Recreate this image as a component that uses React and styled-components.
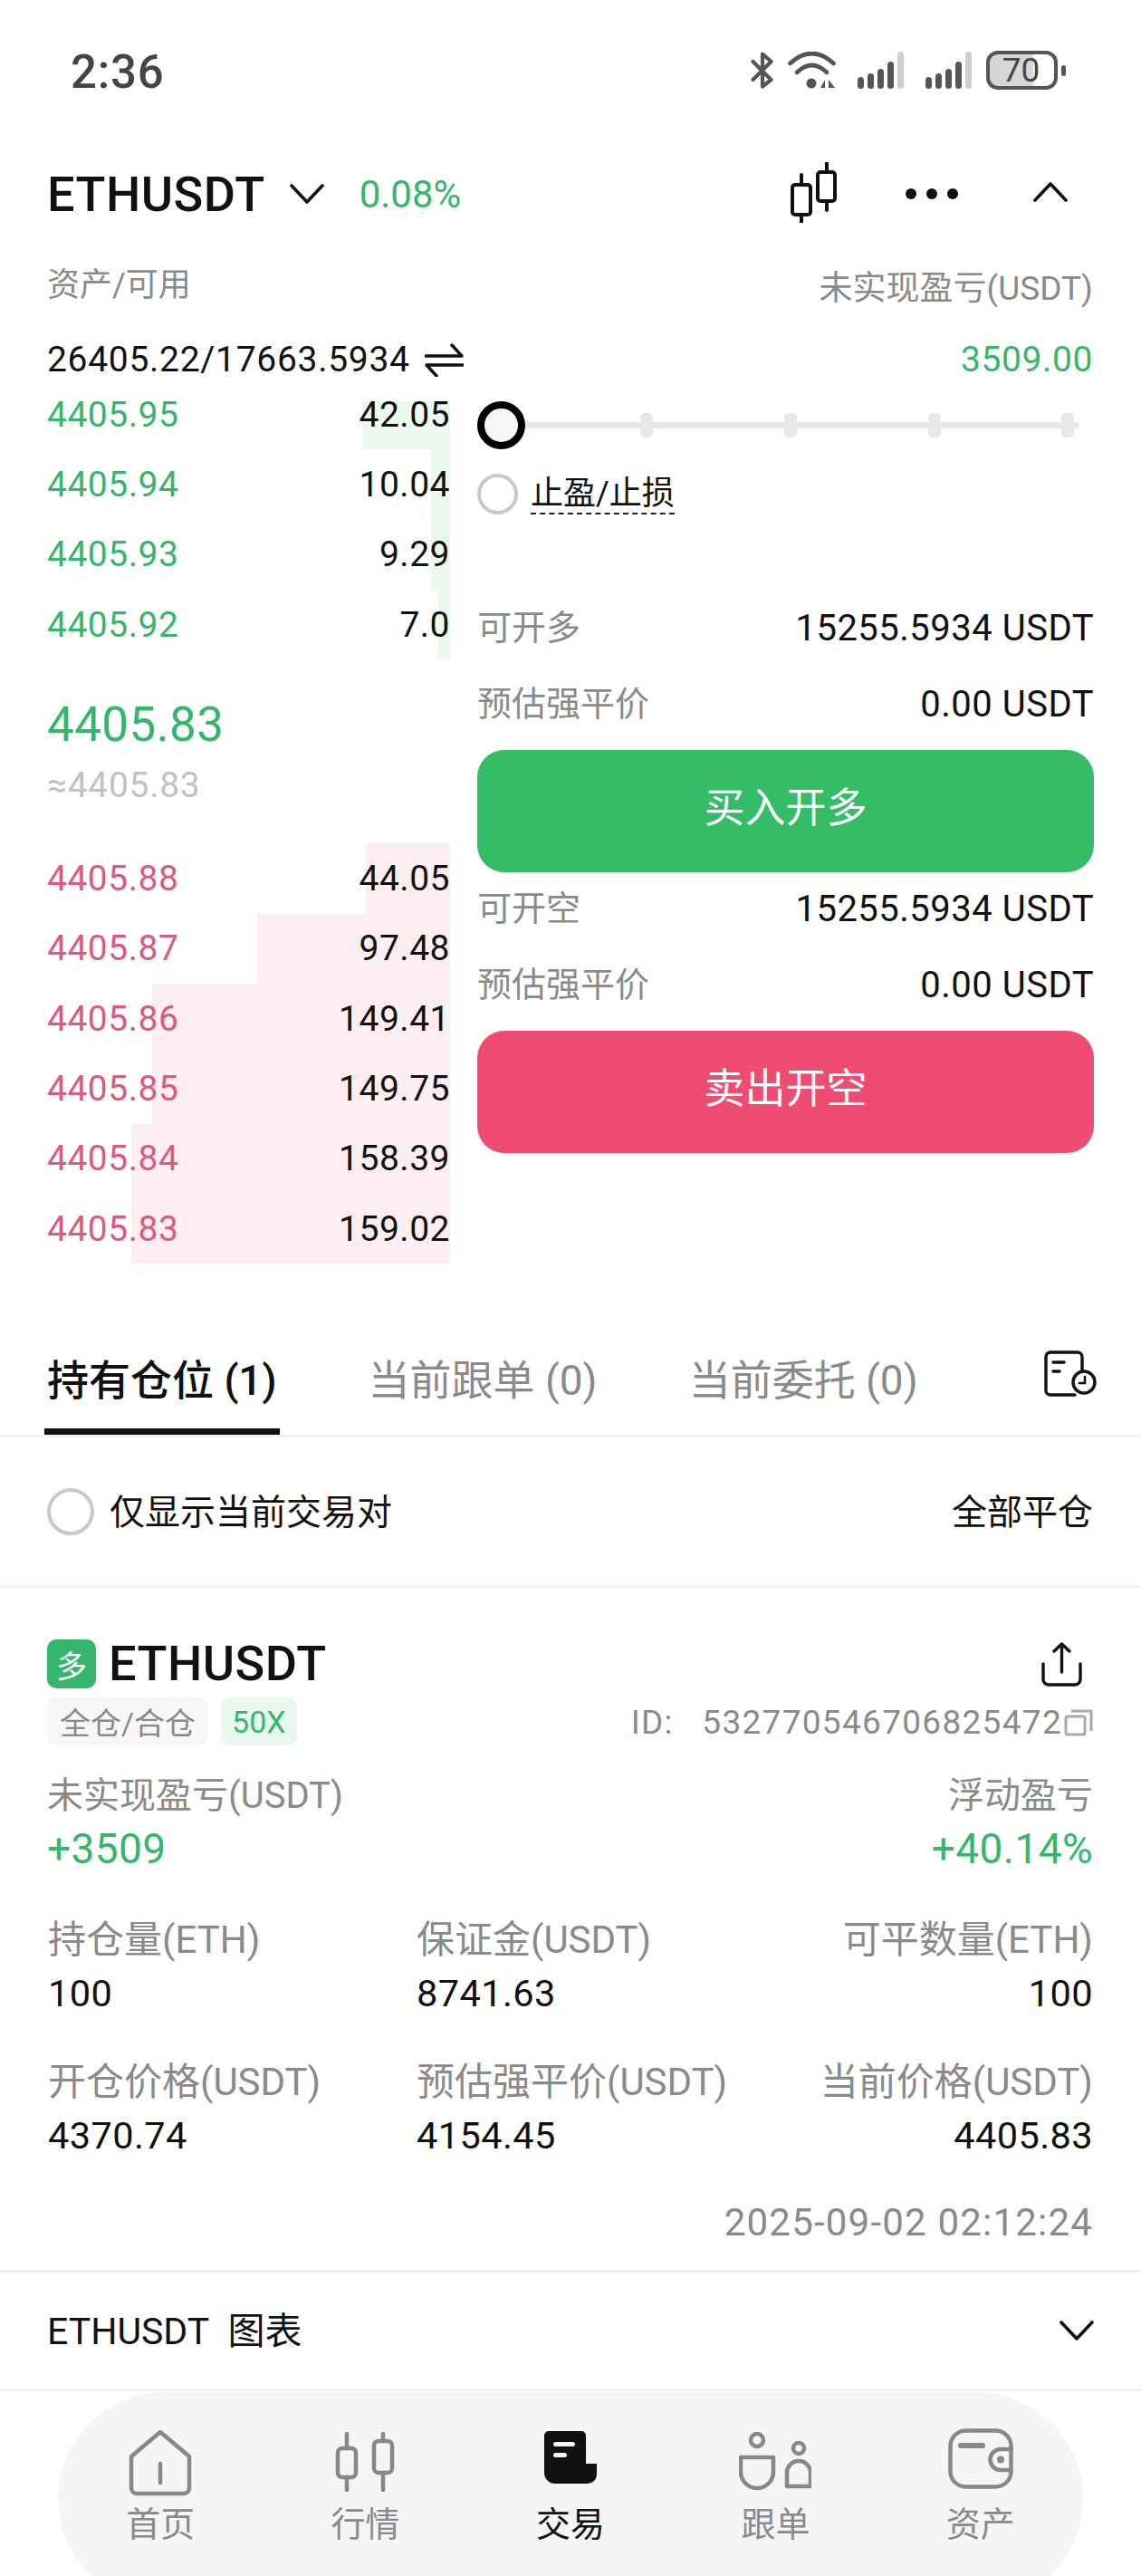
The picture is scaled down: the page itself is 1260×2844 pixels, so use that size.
import React from 'react';
import styled, { createGlobalStyle } from 'styled-components';

const Global = createGlobalStyle`
  html, body { margin: 0; padding: 0; background: #fff; }
  * { box-sizing: border-box; }
`;
const GREEN = '#36b66c';
const GRAY = '#8a8a8a';
const FONT = 'Roboto, "Noto Sans CJK SC", sans-serif';

const Page = styled.div`
  width: 1260px; height: 2844px; overflow: hidden; background: #fff;
  font-family: ${FONT}; color: #111; font-size: 38px;
`;
const StatusBar = styled.div`
  height: 156px; display: flex; align-items: center; padding: 0 83px 0 78px;
`;
const Time = styled.div`font-size: 51px; font-weight: 500; color: #444; flex: 1; letter-spacing: 0.8px; padding-top: 3px;`;
const StatusIcons = styled.div`display: flex; align-items: center; margin-top: -1px;`;
const Slot = styled.div`display: flex; margin-left: ${p => p.$left}px;`;
const Battery = styled.div`
  width: 79px; height: 43px; border: 4px solid #555; border-radius: 13px; margin-left: 16px;
  background: linear-gradient(90deg, #d6d6d6 68%, #fff 68%);
  display: flex; align-items: center; justify-content: center;
  font-size: 37px; color: #444; line-height: 1; padding-right: 2px;
`;
const BatteryTip = styled.div`width: 5px; height: 12px; background: #555; border-radius: 3px; margin-left: 4px;`;

const Header = styled.div`
  height: 112px; display: flex; align-items: center; padding: 0 81px 0 52px;
`;
const Symbol = styled.div`font-size: ${p => p.$size || 54}px; font-weight: 500; letter-spacing: 0.5px; line-height: 1;`;
const SymbolHead = styled(Symbol)`padding-top: 5px;`;
const Change = styled.div`font-size: 42px; color: ${GREEN}; margin-left: 39px; padding-top: 5px;`;
const HeaderRight = styled.div`margin-left: auto; display: flex; align-items: center;`;
const DownChevron = styled.svg`margin-left: 27px; margin-top: 4px;`;
const Dots = styled.div`display: flex; gap: 11px; margin: 4px 83px 0 76px;`;
const Dot = styled.i`width: 12px; height: 12px; background: #111; border-radius: 50%;`;

const SpreadRow = styled.div`
  display: flex; justify-content: space-between; align-items: center;
  padding: ${p => p.$pad || '0 53px 0 52px'}; height: ${p => p.$h}px;
`;
const AssetLabel = styled.div`font-size: ${p => p.$size || 36}px; color: ${GRAY}; line-height: 1; padding-bottom: ${p => p.$lift || 0}px;`;
const AssetValue = styled.div`display: flex; align-items: center; gap: 16px; font-size: 39px; letter-spacing: 0.7px; line-height: 1; transform: translateY(4px);`;
const AssetGreen = styled.div`font-size: 39px; letter-spacing: 0.6px; color: ${GREEN}; line-height: 1; transform: translateY(4px);`;

const Body = styled.div`display: flex; padding: 0 52px 0 52px; gap: 30px;`;
const Book = styled.div`width: 445px; flex: none;`;
const BookRow = styled.div`
  position: relative; height: 77.33px; display: flex; justify-content: space-between; align-items: center;
  font-size: 39px; letter-spacing: 0.5px; padding-right: 0;
`;
const Depth = styled.div`
  position: absolute; right: 0; bottom: 0; top: ${p => p.$top || 0}px;
  background: ${p => p.$ask ? '#fdeef1' : '#eaf8f0'};
`;
const Price = styled.span`position: relative; color: ${p => p.$ask ? '#db5a80' : GREEN};`;
const Qty = styled.span`position: relative;`;
const Mid = styled.div`height: 203px; display: flex; flex-direction: column; padding-top: 39px;`;
const MidPrice = styled.div`font-size: 53px; line-height: 66px; letter-spacing: 0.4px; color: ${GREEN};`;
const MidSub = styled.div`font-size: 39px; line-height: 68px; letter-spacing: 0.7px; color: #c2c2c2;`;

const Panel = styled.div`flex: 1; padding-top: 24px; min-width: 0;`;
const Slider = styled.div`position: relative; height: 53px; display: flex; align-items: center;`;
const Track = styled.div`position: absolute; left: 20px; right: 16px; top: 23px; height: 7px; background: #e8e8e8; border-radius: 4px;`;
const Thumb = styled.div`position: relative; width: 53px; height: 53px; border-radius: 50%; border: 8px solid #000; background: #f7f7f8;`;
const Tick = styled.div`position: absolute; top: 13px; width: 14px; height: 27px; background: #e8e8e8; border-radius: 5px;`;
const CheckRow = styled.div`display: flex; align-items: center; margin-top: 27px; height: 45px; gap: 14px;`;
const Circle = styled.div`
  width: ${p => p.$size}px; height: ${p => p.$size}px; border-radius: 50%; border: 4px solid #c9c9c9; flex: none;
`;
const Dashed = styled.span`font-size: 36px; line-height: 38px; border-bottom: 2px dashed #222; padding-bottom: 2px; margin-top: 2px;`;
const Info = styled.div`display: flex; flex-direction: column; gap: 4px;`;
const InfoGroup = styled(Info)`margin-top: ${p => p.$top || 0}px;`;
const InfoRow = styled.div`height: 80px; display: flex; justify-content: space-between; align-items: center;`;
const InfoLabel = styled.span`font-size: 38px; color: ${GRAY}; line-height: 1; padding-bottom: 1px;`;
const InfoValue = styled.span`font-size: 40px; letter-spacing: 0.5px;`;
const Action = styled.div`
  height: 135px; border-radius: 30px; margin-top: 11px; background: ${p => p.$bg};
  color: #fff; font-size: 45px; line-height: 1; display: flex; align-items: center; justify-content: center; padding-bottom: 6px;
`;

const Tabs = styled.div`
  margin-top: 90px; height: 102px; border-bottom: 3px solid #f1f1f1; display: flex; padding-left: 49px; padding-right: 49px; gap: 95px;
`;
const Tab = styled.div`
  height: 99px; line-height: 79px; font-size: 46px; padding: 0 3px; white-space: nowrap;
  font-weight: ${p => p.$on ? 500 : 400}; color: ${p => p.$on ? '#111' : GRAY};
  border-bottom: 7px solid ${p => p.$on ? '#111' : 'transparent'};
`;
const TabIcon = styled.svg`margin: 6px 0 0 auto; flex: none;`;
const Filter = styled.div`
  height: 166px; border-bottom: 3px solid #f1f1f1; display: flex; align-items: center; padding: 0 53px 0 52px;
`;
const FilterText = styled.span`font-size: 39px; line-height: 1; margin-left: 17px; padding-top: 3px;`;
const FilterAction = styled.span`font-size: 39px; line-height: 1; margin-left: auto; padding-top: 3px;`;

const Card = styled.div`
  padding: 57px 53px 27px 52px; border-bottom: 3px solid #f1f1f1; height: 756px;
`;
const CardHead = styled.div`display: flex; align-items: center; height: 54px;`;
const LongBadge = styled.div`
  width: 54px; height: 54px; border-radius: 10px; background: ${GREEN}; color: #fff;
  font-size: 34px; display: flex; align-items: center; justify-content: center; margin-right: 14px;
`;
const HeadRight = styled.svg`margin-left: auto; margin-right: 12px;`;
const TagRow = styled.div`display: flex; align-items: center; margin-top: 10px; height: 53px;`;
const Tag = styled.div`
  height: 53px; padding: 0 ${p => p.$pad}px; border-radius: 10px; margin-right: 14px; display: flex; align-items: center;
  background: ${p => p.$green ? '#e9f7ef' : '#f7f7f7'}; color: ${p => p.$green ? GREEN : GRAY}; font-size: ${p => p.$size}px;
`;
const IdText = styled.div`margin-left: auto; display: flex; align-items: center; font-size: 37px; color: ${GRAY}; letter-spacing: 1.3px; padding-top: 2px;`;
const PnlLabels = styled.div`display: flex; justify-content: space-between; margin-top: 28px; font-size: 40px; line-height: 56px; color: ${GRAY};`;
const PnlValues = styled.div`display: flex; justify-content: space-between; margin-top: 2px; font-size: 46px; line-height: 56px; letter-spacing: 0.4px; color: ${GREEN};`;
const Stats = styled.div`
  display: grid; grid-template-columns: 407px 1fr auto; row-gap: 42px; margin-top: 45px; padding-left: 1px;
`;
const Stat = styled.div`
  display: flex; flex-direction: column; gap: 3px; text-align: ${p => p.$right ? 'right' : 'left'};
`;
const StatLabel = styled.div`font-size: 42px; line-height: 56px; color: ${GRAY};`;
const StatValue = styled.div`font-size: 41.5px; line-height: 56px; letter-spacing: 0.4px;`;
const DateText = styled.div`margin-top: 40px; text-align: right; font-size: 42px; line-height: 56px; letter-spacing: 1.2px; color: ${GRAY};`;

const ChartRow = styled.div`
  height: 131px; border-bottom: 3px solid #f1f1f1; display: flex; align-items: center; justify-content: space-between; padding: 0 52px 0 52px;
  font-size: 41px; line-height: 1;
`;
const ChartTitle = styled.span`padding-top: 3px;`;
const Nav = styled.div`
  margin: 1px 64px 0; height: 236px; border-radius: 118px; background: #f5f5f5;
  display: grid; grid-template-columns: repeat(5, 1fr); padding-top: 41px;
`;
const NavItem = styled.div`
  display: flex; flex-direction: column; align-items: center;
  color: ${p => p.$on ? '#111' : GRAY};
`;
const NavIcon = styled.div`height: 76px; display: flex; align-items: flex-start; justify-content: center;`;
const NavLabel = styled.div`font-size: 38px; line-height: 58px;`;

const ChevronSvg = ({ up, w = 38, h = 22, s = 3.6, ...r }) => (
  <svg width={w} height={h} viewBox={`0 0 ${w} ${h}`} fill="none" stroke="#111" strokeWidth={s} strokeLinecap="round" strokeLinejoin="round" {...r}>
    <path d={up ? `M2 ${h - 2} L${w / 2} 2 L${w - 2} ${h - 2}` : `M2 2 L${w / 2} ${h - 2} L${w - 2} 2`} />
  </svg>
);
const Bluetooth = () => (
  <svg width="25" height="41" viewBox="0 0 25 41" fill="none" stroke="#555" strokeWidth="4.2" strokeLinecap="round" strokeLinejoin="round">
    <path d="M2.5 11 L22.5 31 L13 38.5 V2.5 L22.5 11 L2.5 31" />
  </svg>
);
const Wifi = () => (
  <svg width="53" height="41" viewBox="0 0 53 41" fill="none" stroke="#555" strokeWidth="4.6" strokeLinecap="round">
    <path d="M2.5 13 Q26.5 -9 50.5 13" />
    <path d="M10 23 Q26.5 7 43 23" />
    <circle cx="26" cy="35" r="5.5" fill="#555" stroke="none" />
    <path d="M41 31 L36 40 H41Z M45 31 L52 40 H45Z" fill="#555" stroke="none" />
  </svg>
);
const Signal = () => {
  const bars = [13, 17, 22, 30, 41];
  return (
    <svg width="51" height="41" viewBox="0 0 51 41">
      {bars.map((h, i) => <rect key={i} x={i * 11} y={41 - h} width="7" height={h} rx="3.5" fill={i === 4 ? '#cfcfcf' : '#555'} />)}
    </svg>
  );
};
const Candles = () => (
  <svg width="51" height="67" viewBox="0 0 51 67" fill="none" stroke="#111" strokeWidth="4" strokeLinecap="round">
    <rect x="2" y="25" width="20" height="33" rx="3" />
    <path d="M12 14 V25 M12 58 V66" />
    <rect x="30" y="11" width="19" height="32" rx="3" />
    <path d="M40 1 V11 M40 43 V53" />
  </svg>
);
const Swap = () => (
  <svg width="43" height="37" viewBox="0 0 43 37" fill="none" stroke="#111" strokeWidth="3.4" strokeLinecap="round" strokeLinejoin="round">
    <path d="M1 14 H41 L30 2" />
    <path d="M42 24 H2 L13 36" />
  </svg>
);
const HistoryIcon = () => (
  <TabIcon width="58" height="51" viewBox="0 0 58 51" fill="none" stroke="#111" strokeWidth="3.4" strokeLinecap="round">
    <path d="M42 22 V7 a5 5 0 0 0 -5 -5 H7 a5 5 0 0 0 -5 5 V44 a5 5 0 0 0 5 5 H34" />
    <path d="M10 13 H22 M10 23 H17" />
    <circle cx="44" cy="35" r="12" />
    <path d="M45 29 V36 H39" strokeWidth="2.6" />
  </TabIcon>
);
const Share = () => (
  <HeadRight width="45" height="49" viewBox="0 0 45 49" fill="none" stroke="#111" strokeWidth="3.4" strokeLinecap="round" strokeLinejoin="round">
    <path d="M22.5 33 V2 M14 10 L22.5 2 L31 10" />
    <path d="M2 24 V41 a6 6 0 0 0 6 6 H37 a6 6 0 0 0 6 -6 V24" />
  </HeadRight>
);
const Copy = () => (
  <svg width="32" height="30" viewBox="0 0 32 30" fill="none" stroke="#aaa" strokeWidth="3" style={{ marginLeft: 2 }}>
    <rect x="2" y="8" width="21" height="20" rx="2" />
    <path d="M8 2 H30 V24" />
  </svg>
);
const HomeIcon = () => (
  <svg width="70" height="74" viewBox="0 0 70 74" fill="none" stroke="#888" strokeWidth="4.5" strokeLinejoin="round" strokeLinecap="round">
    <path d="M35 3 L67 30 V65 a6 6 0 0 1 -6 6 H9 a6 6 0 0 1 -6 -6 V30 Z" />
    <path d="M35 38 V59" />
  </svg>
);
const MarketIcon = () => (
  <svg width="67" height="66" viewBox="0 0 67 66" fill="none" stroke="#888" strokeWidth="4.5" strokeLinecap="round" style={{ marginTop: 3 }}>
    <rect x="3" y="18" width="20" height="32" rx="5" />
    <path d="M13 2 V18 M13 50 V64" />
    <rect x="43" y="10" width="20" height="35" rx="5" />
    <path d="M53 2 V10 M53 45 V64" />
  </svg>
);
const TradeIcon = () => (
  <svg width="58" height="58" viewBox="0 0 58 58" style={{ marginTop: 2 }}>
    <path fill="#111" d="M5 0 H41 a5 5 0 0 1 5 5 V36 H58 V48 a10 10 0 0 1 -10 10 H12 a12 12 0 0 1 -12 -12 V5 a5 5 0 0 1 5 -5Z" />
    <rect x="10" y="12" width="24" height="5" rx="2.5" fill="#f5f5f5" />
    <rect x="10" y="24" width="15" height="5" rx="2.5" fill="#f5f5f5" />
  </svg>
);
const CopyIcon = () => (
  <svg width="80" height="65" viewBox="0 0 80 65" fill="none" stroke="#888" strokeWidth="4.5" strokeLinecap="round" strokeLinejoin="round" style={{ marginTop: 3 }}>
    <circle cx="20" cy="9" r="7" />
    <path d="M2 28 H38 V44 a18 18 0 0 1 -36 0 Z" />
    <circle cx="66" cy="18" r="6" />
    <path d="M53 60 V45 a13 13 0 0 1 26 0 V60 Z" />
  </svg>
);
const WalletIcon = () => (
  <svg width="72" height="67" viewBox="0 0 72 67" fill="none" stroke="#888" strokeWidth="4.5" strokeLinecap="round" style={{ marginTop: -1 }}>
    <rect x="2.5" y="2.5" width="67" height="62" rx="17" />
    <path d="M14 19 H38" strokeWidth="6" />
    <path d="M70 23 H58 a11.5 11.5 0 0 0 0 23 H70" />
    <circle cx="58" cy="34.5" r="4" fill="#888" stroke="none" />
  </svg>
);

const bids = [
  ['4405.95', '42.05', 97, 24], ['4405.94', '10.04', 21, 0], ['4405.93', '9.29', 21, 0], ['4405.92', '7.0', 13, 0],
];
const asks = [
  ['4405.88', '44.05', 93], ['4405.87', '97.48', 213], ['4405.86', '149.41', 329],
  ['4405.85', '149.75', 329], ['4405.84', '158.39', 352], ['4405.83', '159.02', 352],
];
const ticks = [180, 339, 498, 645];

export default function App() {
  return (
    <Page>
      <Global />
      <StatusBar>
        <Time>2:36</Time>
        <StatusIcons>
          <Bluetooth />
          <Slot $left={16}><Wifi /></Slot>
          <Slot $left={24}><Signal /></Slot>
          <Slot $left={24}><Signal /></Slot>
          <Battery>70</Battery>
          <BatteryTip />
        </StatusIcons>
      </StatusBar>
      <Header>
        <SymbolHead>ETHUSDT</SymbolHead>
        <DownChevron as={ChevronSvg} />
        <Change>0.08%</Change>
        <HeaderRight>
          <Candles />
          <Dots><Dot /><Dot /><Dot /></Dots>
          <ChevronSvg up />
        </HeaderRight>
      </Header>
      <SpreadRow $h={100}>
        <AssetLabel $lift={6}>资产/可用</AssetLabel>
        <AssetLabel $size={37}>未实现盈亏(USDT)</AssetLabel>
      </SpreadRow>
      <SpreadRow $h={51}>
        <AssetValue>26405.22/17663.5934 <Swap /></AssetValue>
        <AssetGreen>3509.00</AssetGreen>
      </SpreadRow>
      <Body>
        <Book>
          {bids.map(([p, q, w, top]) => (
            <BookRow key={p}>
              <Depth $top={top} style={{ width: w }} />
              <Price>{p}</Price><Qty>{q}</Qty>
            </BookRow>
          ))}
          <Mid>
            <MidPrice>4405.83</MidPrice>
            <MidSub>≈4405.83</MidSub>
          </Mid>
          {asks.map(([p, q, w]) => (
            <BookRow key={p}>
              <Depth $ask style={{ width: w }} />
              <Price $ask>{p}</Price><Qty>{q}</Qty>
            </BookRow>
          ))}
        </Book>
        <Panel>
          <Slider>
            <Track />
            {ticks.map(x => <Tick key={x} style={{ left: x }} />)}
            <Thumb />
          </Slider>
          <CheckRow>
            <Circle $size={45} />
            <Dashed>止盈/止损</Dashed>
          </CheckRow>
          <InfoGroup $top={85}>
            <InfoRow><InfoLabel>可开多</InfoLabel><InfoValue>15255.5934 USDT</InfoValue></InfoRow>
            <InfoRow><InfoLabel>预估强平价</InfoLabel><InfoValue>0.00 USDT</InfoValue></InfoRow>
          </InfoGroup>
          <Action $bg="#34bd66">买入开多</Action>
          <Info>
            <InfoRow><InfoLabel>可开空</InfoLabel><InfoValue>15255.5934 USDT</InfoValue></InfoRow>
            <InfoRow><InfoLabel>预估强平价</InfoLabel><InfoValue>0.00 USDT</InfoValue></InfoRow>
          </Info>
          <Action $bg="#ee4c72">卖出开空</Action>
        </Panel>
      </Body>
      <Tabs>
        <Tab $on>持有仓位 (1)</Tab>
        <Tab>当前跟单 (0)</Tab>
        <Tab>当前委托 (0)</Tab>
        <HistoryIcon />
      </Tabs>
      <Filter>
        <Circle $size={52} />
        <FilterText>仅显示当前交易对</FilterText>
        <FilterAction>全部平仓</FilterAction>
      </Filter>
      <Card>
        <CardHead>
          <LongBadge>多</LongBadge>
          <Symbol>ETHUSDT</Symbol>
          <Share />
        </CardHead>
        <TagRow>
          <Tag $pad={14} $size={34}>全仓/合仓</Tag>
          <Tag $green $pad={12} $size={34}>50X</Tag>
          <IdText>ID:&nbsp;&nbsp; 532770546706825472<Copy /></IdText>
        </TagRow>
        <PnlLabels><span>未实现盈亏(USDT)</span><span>浮动盈亏</span></PnlLabels>
        <PnlValues><span>+3509</span><span>+40.14%</span></PnlValues>
        <Stats>
          <Stat><StatLabel>持仓量(ETH)</StatLabel><StatValue>100</StatValue></Stat>
          <Stat><StatLabel>保证金(USDT)</StatLabel><StatValue>8741.63</StatValue></Stat>
          <Stat $right><StatLabel>可平数量(ETH)</StatLabel><StatValue>100</StatValue></Stat>
          <Stat><StatLabel>开仓价格(USDT)</StatLabel><StatValue>4370.74</StatValue></Stat>
          <Stat><StatLabel>预估强平价(USDT)</StatLabel><StatValue>4154.45</StatValue></Stat>
          <Stat $right><StatLabel>当前价格(USDT)</StatLabel><StatValue>4405.83</StatValue></Stat>
        </Stats>
        <DateText>2025-09-02 02:12:24</DateText>
      </Card>
      <ChartRow>
        <ChartTitle>ETHUSDT&nbsp; 图表</ChartTitle>
        <ChevronSvg />
      </ChartRow>
      <Nav>
        <NavItem><NavIcon><HomeIcon /></NavIcon><NavLabel>首页</NavLabel></NavItem>
        <NavItem><NavIcon><MarketIcon /></NavIcon><NavLabel>行情</NavLabel></NavItem>
        <NavItem $on><NavIcon><TradeIcon /></NavIcon><NavLabel>交易</NavLabel></NavItem>
        <NavItem><NavIcon><CopyIcon /></NavIcon><NavLabel>跟单</NavLabel></NavItem>
        <NavItem><NavIcon><WalletIcon /></NavIcon><NavLabel>资产</NavLabel></NavItem>
      </Nav>
    </Page>
  );
}
